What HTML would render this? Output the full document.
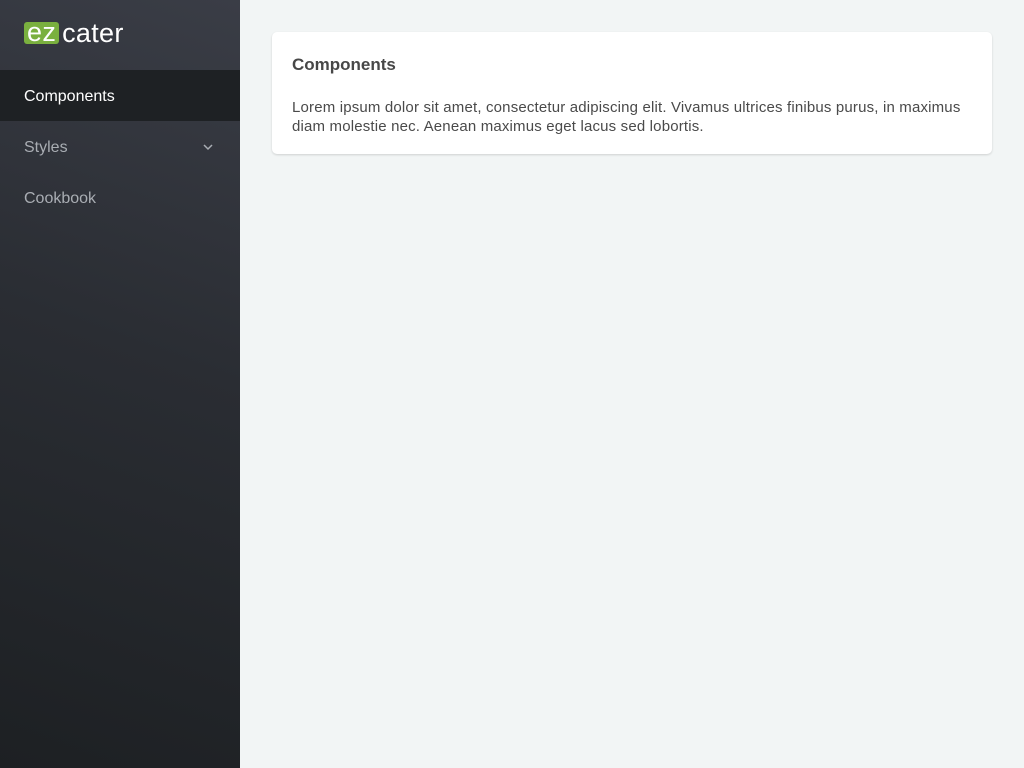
<!DOCTYPE html>
<html><head><style>
body{margin:0;width:1024px;height:768px;background:#f2f5f5;font-family:"Liberation Sans",sans-serif;overflow:hidden;position:relative}
.side{position:absolute;left:0;top:0;width:240px;height:768px;background:linear-gradient(200deg,#3a3d46 0%,#2a2d33 45%,#1d2023 100%)}
.logo{position:absolute;left:24px;top:20px;height:26px;font-size:27px;color:#fff;letter-spacing:0.3px;line-height:26px}
.logo .ez{display:inline-block;background:#7ab03f;border-radius:3px;padding:0 3px;height:22px;line-height:20px;margin-top:2px;vertical-align:top;margin-right:3px}
.nav{position:absolute;left:0;width:240px;height:51px;line-height:54px;padding-left:24px;box-sizing:border-box;font-size:16px;color:#a9adb3}
.active{background:#1e2124;color:#fff}
.card{position:absolute;left:272px;top:32px;width:720px;height:122px;background:#fff;border-radius:5px;box-shadow:0 1px 2px rgba(0,0,0,.15);box-sizing:border-box;padding:21px 20px}
h2{margin:0;font-size:17px;color:#474747;font-weight:bold;line-height:24px}
p{margin:21px 0 0;font-size:15px;letter-spacing:0.17px;line-height:19px;color:#4a4a4a}
</style></head><body>
<div class="side">
<div class="logo"><span class="ez">ez</span>cater</div>
<div class="nav active" style="top:70px">Components</div>
<div class="nav" style="top:121px">Styles<svg style="position:absolute;left:203px;top:22px" width="10" height="8" viewBox="0 0 10 8"><path d="M1 2l4 4 4-4" stroke="#a9adb3" stroke-width="1.5" fill="none"/></svg></div>
<div class="nav" style="top:172px">Cookbook</div>
</div>
<div class="card"><h2>Components</h2><p>Lorem ipsum dolor sit amet, consectetur adipiscing elit. Vivamus ultrices finibus purus, in maximus diam molestie nec. Aenean maximus eget lacus sed lobortis.</p></div>
</body></html>
